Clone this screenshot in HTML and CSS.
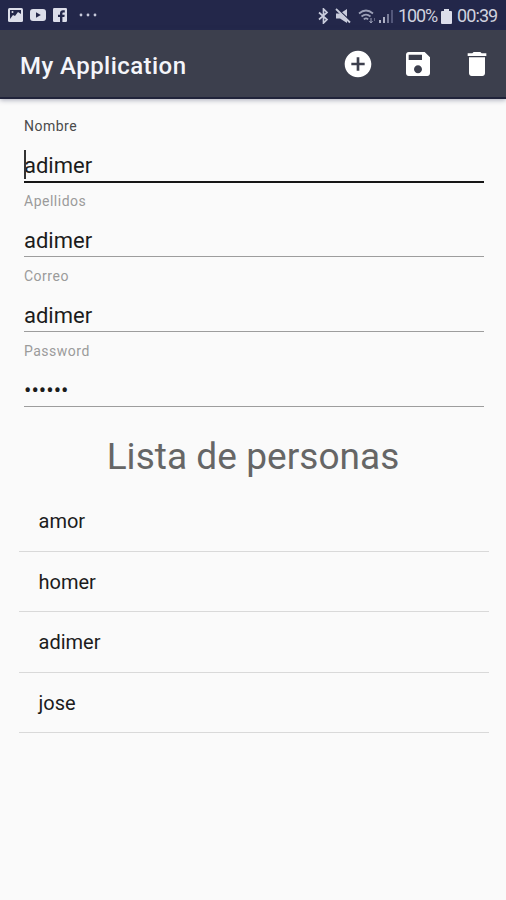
FILE: index.html
```html
<!DOCTYPE html>
<html lang="es">
<head>
<meta charset="utf-8">
<title>My Application</title>
<link rel="stylesheet" href="styles.css">
</head>
<body>
<div class="status">
  <div class="notifications">
    <svg width="15" height="14" viewBox="0 0 15 14"><rect width="15" height="14" rx="1.5" fill="#dcdeea"/><path d="M2 2h11v4l-3-2-3 4-2-1-3 4z" fill="#23274a"/><circle cx="4.5" cy="4" r="1" fill="#dcdeea"/></svg>
    <svg width="16" height="12" viewBox="0 0 16 12"><rect width="16" height="12" rx="3" fill="#dcdeea"/><path d="M6 3.2v5.6L10.8 6z" fill="#23274a"/></svg>
    <svg width="14" height="14" viewBox="0 0 14 14"><rect width="14" height="14" rx="1.2" fill="#dcdeea"/><path d="M7 14V9H5V6.8h2V5.2C7 3.2 8.200 2.200 10 2.200h1.800v2.200h-1.300c-.8 0-1.100.4-1.100 1v1.400h2.300L11.400 9h-2v5z" fill="#23274a"/></svg>
    <svg class="more" width="18" height="4" viewBox="0 0 18 4" fill="#c6c9da"><circle cx="2" cy="2" r="1.400"/><circle cx="9" cy="2" r="1.400"/><circle cx="16" cy="2" r="1.400"/></svg>
  </div>
  <div class="system">
    <svg class="bt" width="11" height="16" viewBox="0 0 11 16" fill="none" stroke="#c9ccdc" stroke-width="1.700"><path d="M1 4.500l8 7L5.500 15V1L9 4.500l-8 7"/></svg>
    <svg class="mute" width="16" height="16" viewBox="0 0 16 16"><path d="M1 5.500h4L12 1v14l-7-4.500H1z" fill="#c9ccdc"/><path d="M2 .5l14 13" stroke="#23274a" stroke-width="1.500"/><path d="M1 1l14 13.500" stroke="#c9ccdc" stroke-width="1.800"/></svg>
    <svg class="wifi" width="18" height="15" viewBox="0 0 18 15" fill="none" stroke="#9da1b8" stroke-width="1.700"><path d="M1 4.500q7-6 14 0M3.500 7.500q4.500-3.800 9 0M5.800 10.300q2.200-1.800 4.400 0"/><path d="M13 9v5M11.500 12l1.500 2 1.500-2" stroke-width="1"/><path d="M16.500 12V9" stroke-width="1" opacity=".5"/></svg>
    <svg class="signal" width="15" height="14" viewBox="0 0 15 14"><path d="M0 11h2v3H0zM4 8h2v6H4z" fill="#aeb1c4"/><path d="M8 5h2v9H8z" fill="#777b97"/><path d="M12 1h2v13h-2z" fill="#53577a"/></svg>
    <span class="percent">100%</span>
    <svg class="battery" width="11" height="15" viewBox="0 0 11 15"><path d="M3 0h5v2h2q1 0 1 1v11q0 1-1 1H1q-1 0-1-1V3q0-1 1-1h2z" fill="#dcdeea"/></svg>
    <span class="clock">00:39</span>
  </div>
</div>
<header class="appbar">
  <h1>My Application</h1>
  <nav class="actions">
    <svg viewBox="0 0 24 24"><path d="M12 2C6.480 2 2 6.480 2 12s4.480 10 10 10 10-4.480 10-10S17.520 2 12 2zm5 11h-4v4h-2v-4H7v-2h4V7h2v4h4v2z"/></svg>
    <svg viewBox="0 0 24 24"><path d="M17 3H5c-1.110 0-2 .9-2 2v14c0 1.100.89 2 2 2h14c1.100 0 2-.9 2-2V7l-4-4zm-5 16c-1.660 0-3-1.340-3-3s1.340-3 3-3 3 1.340 3 3-1.340 3-3 3zm3-10H5V5h10v4z"/></svg>
    <svg viewBox="0 0 24 24"><path d="M6 19c0 1.100.9 2 2 2h8c1.100 0 2-.9 2-2V7H6v12zM19 4h-3.500l-1-1h-5l-1 1H5v2h14V4z"/></svg>
  </nav>
</header>
<main>
  <section class="form">
    <div class="field focused"><span class="label">Nombre</span><div class="value"><span class="text">adimer</span></div></div>
    <div class="field"><span class="label">Apellidos</span><div class="value"><span class="text">adimer</span></div></div>
    <div class="field"><span class="label">Correo</span><div class="value"><span class="text">adimer</span></div></div>
    <div class="field"><span class="label">Password</span><div class="value"><span class="text">••••••</span></div></div>
  </section>
  <h2>Lista de personas</h2>
  <ul class="people">
    <li>amor</li>
    <li>homer</li>
    <li>adimer</li>
    <li>jose</li>
  </ul>
</main>
</body>
</html>
```
FILE: styles.css
```css
* { box-sizing: border-box; }
body { margin: 0; width: 506px; height: 900px; overflow: hidden; background: #fafafa; color: #1c1c1c; font-family: Roboto, sans-serif; }
svg { display: block; flex: none; }
.status { height: 30px; background: #23274a; display: flex; justify-content: space-between; align-items: center; padding: 0 9px 0 8px; }
.notifications { display: flex; align-items: center; gap: 7px; }
.more { margin-left: 5px; }
.system { display: flex; align-items: center; color: #d0d2df; line-height: 30px; padding-top: 2px; }
.mute { margin-left: 6px; }
.wifi { margin-left: 7px; }
.signal { margin-left: 3px; }
.percent { margin-left: 4px; width: 40px; white-space: nowrap; letter-spacing: -1.100px; }
.battery { margin-left: 3px; }
.clock { margin-left: 5px; width: 40px; white-space: nowrap; letter-spacing: -.9px; }
.percent, .clock { font-size: 18px; }
.appbar { position: relative; height: 69px; background: #3c3f4d; border-bottom: 2px solid #20233a; box-shadow: 0 1px 5px rgba(40, 44, 80, .4); display: flex; align-items: center; justify-content: space-between; padding: 1px 13px 0 20px; }
.appbar h1 { margin: 4px 0 0; font-size: 24px; line-height: 30px; font-weight: 500; letter-spacing: .45px; color: #f4f5fa; }
.actions { display: flex; gap: 27.500px; }
.actions svg { width: 32px; height: 32px; fill: #fff; }
.form { padding: 8px 22px 0 24px; }
.field { height: 75px; padding-top: 10px; border-bottom: 1px solid #9d9d9d; }
.field.focused { height: 76px; border-bottom: 2px solid #161616; }
.field:nth-child(2) { height: 74px; padding-top: 9px; }
.label { display: block; font-size: 14px; line-height: 18px; letter-spacing: .5px; color: #9b9b9b; }
.focused .label { color: #4a4a4a; }
.value { display: flex; align-items: center; height: 38px; margin-top: 11.500px; font-size: 22px; line-height: 30px; }
.text { position: relative; }
.focused .text::before { content: ""; position: absolute; left: 0; top: -1px; width: 1.500px; height: 29px; background: #333; }
h2 { margin: 26px 0 0; text-align: center; font-size: 37px; line-height: 48px; font-weight: 400; letter-spacing: .05px; color: #666; }
.people { list-style: none; margin: 10px 17px 0 19px; padding: 0; }
.people li { height: 60.500px; padding: 1px 0 0 19.500px; font-size: 20px; line-height: 59px; border-bottom: 1px solid #d9d9d9; }
```
